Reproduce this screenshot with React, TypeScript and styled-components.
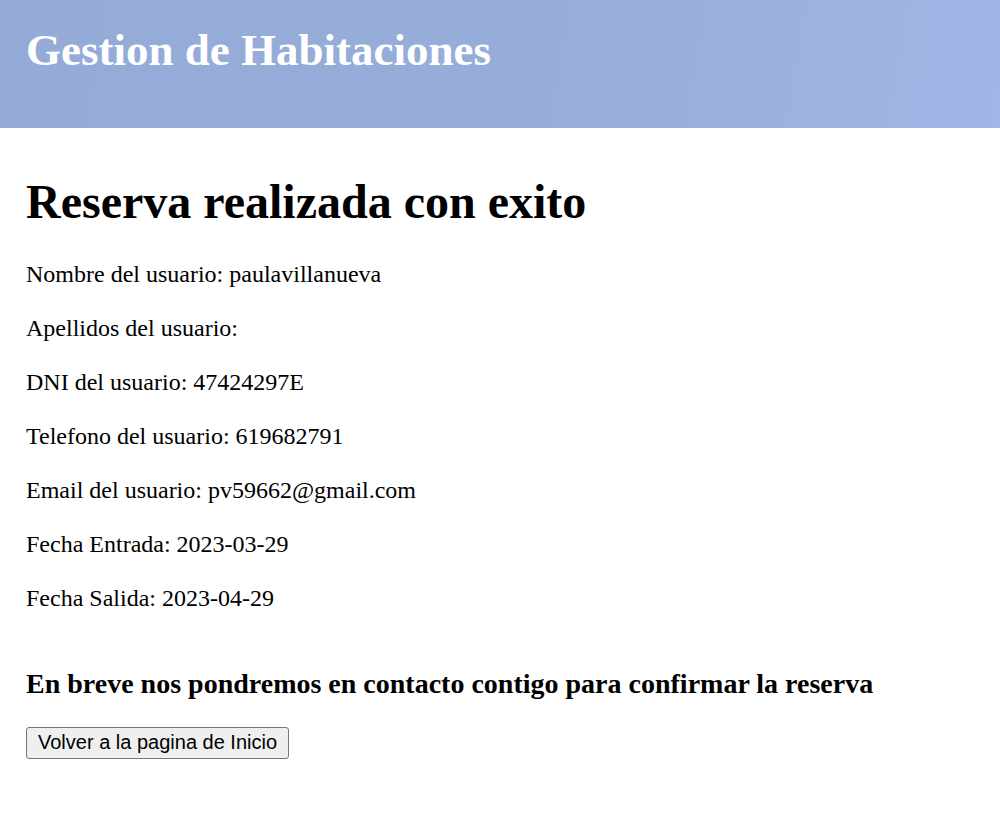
import React from "react";
import styled, { createGlobalStyle } from "styled-components";

const Global = createGlobalStyle`
  html, body { margin: 0; padding: 0; background: #ffffff; }
  body { font-family: "Liberation Serif", "Times New Roman", serif; color: #000; }
`;

const Header = styled.header`
  height: 128px;
  box-sizing: border-box;
  padding: 28px 26px 0;
  background: linear-gradient(100deg, #94aad7 0%, #97aedb 60%, #a0b6e6 100%);
`;

const SiteTitle = styled.h1`
  margin: 0;
  font-size: 45px;
  line-height: 45px;
  font-weight: bold;
  color: #ffffff;
`;

const Main = styled.main`
  display: flex;
  flex-direction: column;
  align-items: flex-start;
  padding: 50px 26px 0;
`;

const Title = styled.h1`
  margin: 0 0 33px;
  font-size: 48px;
  line-height: 48px;
  font-weight: bold;
`;

const Details = styled.div`
  display: flex;
  flex-direction: column;
  gap: 24px;
`;

const Line = styled.p`
  margin: 0;
  font-size: 24px;
  line-height: 30px;
`;

const Notice = styled.h3`
  margin: 55px 0 0;
  font-size: 28px;
  line-height: 32px;
  font-weight: bold;
`;

const Button = styled.button`
  margin-top: 27px;
  font-family: "Liberation Sans", Arial, sans-serif;
  font-size: 20px;
  line-height: 23px;
  padding: 3px 11px 4px;
  border: 1px solid #767676;
  border-radius: 3px;
  background: #efefef;
  color: #000;
  cursor: pointer;
`;

const rows = [
  "Nombre del usuario: paulavillanueva",
  "Apellidos del usuario:",
  "DNI del usuario: 47424297E",
  "Telefono del usuario: 619682791",
  "Email del usuario: pv59662@gmail.com",
  "Fecha Entrada: 2023-03-29",
  "Fecha Salida: 2023-04-29",
];

export default function App() {
  return (
    <>
      <Global />
      <Header>
        <SiteTitle>Gestion de Habitaciones</SiteTitle>
      </Header>
      <Main>
        <Title>Reserva realizada con exito</Title>
        <Details>
          {rows.map((r) => (
            <Line key={r}>{r}</Line>
          ))}
        </Details>
        <Notice>En breve nos pondremos en contacto contigo para confirmar la reserva</Notice>
        <Button>Volver a la pagina de Inicio</Button>
      </Main>
    </>
  );
}
